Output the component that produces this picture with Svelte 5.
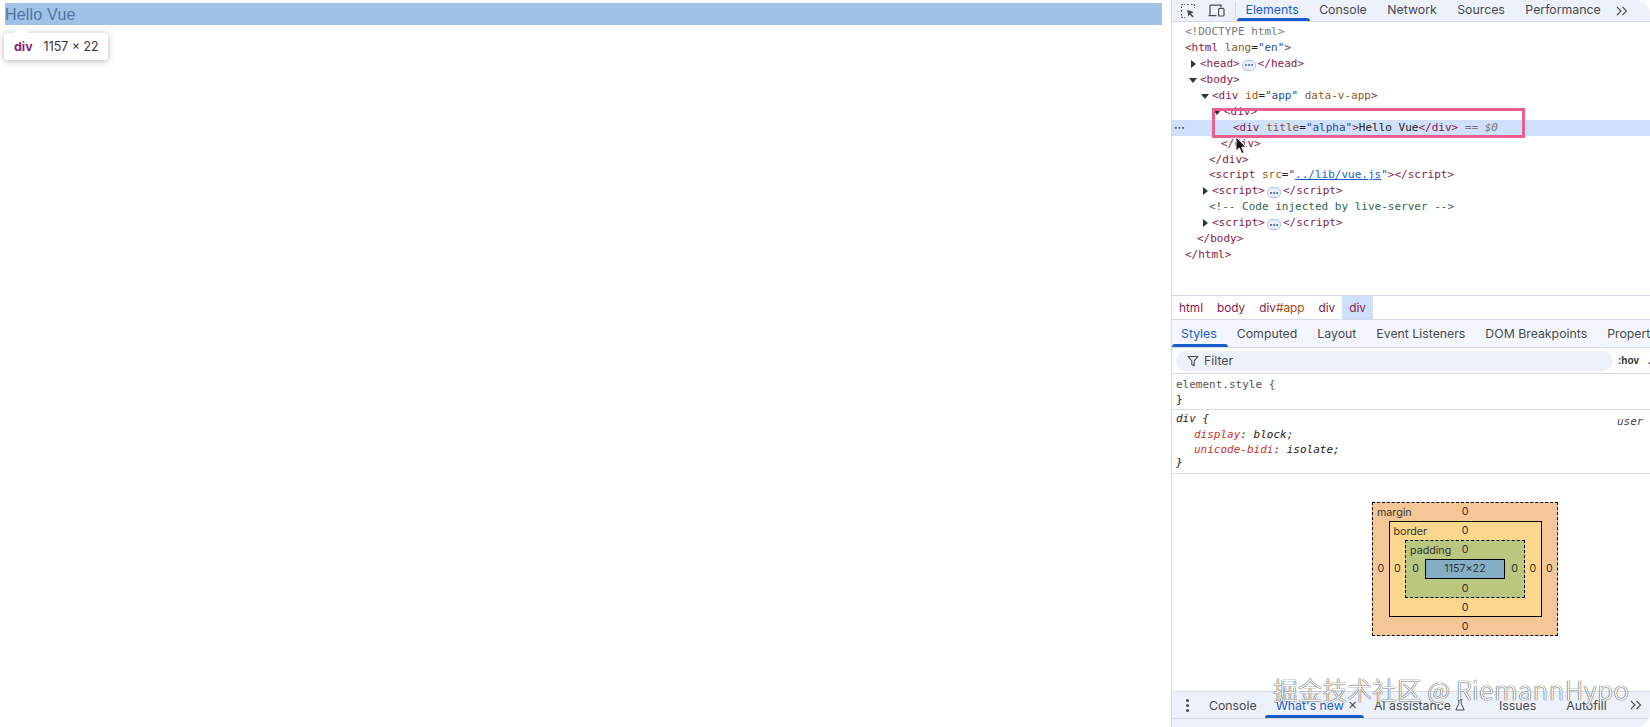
<script lang="ts">
  const topTabs = ['Console', 'Network', 'Sources', 'Performance'];
  const crumbs = ['html', 'body', 'div#app', 'div'];
  const styleTabs = ['Computed', 'Layout', 'Event Listeners', 'DOM Breakpoints', 'Properties'];
</script>

{#snippet more()}
  <span class="more"><span></span><span></span><span></span></span>
{/snippet}

{#snippet chevrons()}
  <svg class="chev" width="12" height="10" viewBox="0 0 12 10" fill="none" stroke="#555" stroke-width="1.2">
    <path d="M1 1l4 4-4 4M6.5 1l4 4-4 4" />
  </svg>
{/snippet}

<div class="screen">
  <main class="page">
    <div class="hello">Hello Vue</div>
    <div class="tip">
      <b>div</b><span>1157 × 22</span>
    </div>
  </main>

  <section class="devtools">
    <nav class="tabs main-tabs">
      <div class="tool-icons">
        <svg width="16" height="16" viewBox="0 0 16 16" fill="none" stroke="#474a50" stroke-width="1.2">
          <path d="M1.5 5V2.5a1 1 0 0 1 1-1H5M7 1.5h2M11 1.5h2.5a1 1 0 0 1 1 1V5M1.5 7v2M1.5 11v2.5a1 1 0 0 0 1 1H5" stroke-dasharray="1.6 1.2" />
          <path d="M7.2 6.8l6.6 2.4-2.8 1.2 2.6 3-1.2 1-2.6-3-1.4 2.4z" fill="#474a50" stroke="none" />
        </svg>
        <svg width="18" height="16" viewBox="0 0 18 16" fill="none" stroke="#474a50" stroke-width="1.2">
          <path d="M2 12V3.2a1 1 0 0 1 1-1h10v2M.5 12.6h8" />
          <rect x="10.6" y="5.4" width="5.4" height="7.6" rx="1" />
        </svg>
      </div>
      <span class="tab active">Elements</span>
      {#each topTabs as t}<span class="tab">{t}</span>{/each}
      {@render chevrons()}
    </nav>

    <div class="tree">
      <div class="row d0 doctype">&lt;!DOCTYPE html&gt;</div>
      <div class="row d0"><i>&lt;html</i> <em>lang</em>=<u>"en"</u><i>&gt;</i></div>
      <div class="row d1 arrowed"><span class="tri right"></span><i>&lt;head&gt;</i>{@render more()}<i>&lt;/head&gt;</i></div>
      <div class="row d1 arrowed"><span class="tri down"></span><i>&lt;body&gt;</i></div>
      <div class="row d2 arrowed"><span class="tri down"></span><i>&lt;div</i> <em>id</em>=<u>"app"</u> <em>data-v-app</em><i>&gt;</i></div>
      <div class="row d3 arrowed"><span class="tri down"></span><i>&lt;div&gt;</i></div>
      <div class="row d4 selected">
        <span class="dots">•••</span>
        <i>&lt;div</i> <em>title</em>=<u>"alpha"</u><i>&gt;</i>Hello Vue<i>&lt;/div&gt;</i> <span class="eq">== <q>$0</q></span>
      </div>
      <div class="row d3"><i>&lt;/div&gt;</i></div>
      <div class="row d2"><i>&lt;/div&gt;</i></div>
      <div class="row d2"><i>&lt;script</i> <em>src</em>=<u>"<a href="#lib">../lib/vue.js</a>"</u><i>&gt;&lt;/script&gt;</i></div>
      <div class="row d2 arrowed"><span class="tri right"></span><i>&lt;script&gt;</i>{@render more()}<i>&lt;/script&gt;</i></div>
      <div class="row d2 comment">&lt;!-- Code injected by live-server --&gt;</div>
      <div class="row d2 arrowed"><span class="tri right"></span><i>&lt;script&gt;</i>{@render more()}<i>&lt;/script&gt;</i></div>
      <div class="row d1"><i>&lt;/body&gt;</i></div>
      <div class="row d0"><i>&lt;/html&gt;</i></div>
      <div class="pink"></div>
      <svg class="cursor" width="14" height="20" viewBox="0 0 14 20">
        <path d="M1 1v14l3.4-3 2.4 5.6 2.4-1-2.4-5.4H11z" fill="#111" stroke="#fff" stroke-width="1" />
      </svg>
    </div>

    <div class="crumbs">
      {#each crumbs as c}
        <span>{#if c === 'div#app'}div<b>#app</b>{:else}{c}{/if}</span>
      {/each}
      <span class="on">div</span>
    </div>

    <nav class="tabs sub">
      <span class="tab active">Styles</span>
      {#each styleTabs as t}<span class="tab">{t}</span>{/each}
    </nav>

    <div class="filter-row">
      <div class="filter">
        <svg width="12" height="12" viewBox="0 0 12 12" fill="none" stroke="#474a50" stroke-width="1.1">
          <path d="M1.2 1.5h9.6L7.2 6v4.6L4.8 9.4V6z" />
        </svg>
        Filter
      </div>
      <span class="hov">:hov</span>
      <span class="hov">.cls</span>
    </div>

    <div class="rule first">
      <div class="grey">element.style {'{'}</div>
      <div>{'}'}</div>
    </div>

    <div class="rule ua">
      <span class="src">user agent</span>
      <div class="open">div {'{'}</div>
      <div class="prop"><span>display</span>: block;</div>
      <div class="prop"><span>unicode-bidi</span>: isolate;</div>
      <div class="close">{'}'}</div>
    </div>

    <div class="metrics">
      <div class="box margin">
        <span class="lbl">margin</span>
        <span class="v-top">0</span>
        <span class="s-left">0</span>
        <div class="box border">
          <span class="lbl">border</span>
          <span class="v-top">0</span>
          <span class="s-left">0</span>
          <div class="box padding">
            <span class="lbl">padding</span>
            <span class="v-top">0</span>
            <span class="s-left">0</span>
            <div class="content">1157×22</div>
            <span class="s-right">0</span>
            <span class="v-bot">0</span>
          </div>
          <span class="s-right">0</span>
          <span class="v-bot">0</span>
        </div>
        <span class="s-right">0</span>
        <span class="v-bot">0</span>
      </div>
    </div>

    <nav class="tabs drawer">
      <span class="kebab"><span></span><span></span><span></span></span>
      <span class="tab">Console</span>
      <span class="tab active news">What's new <small>✕</small></span>
      <span class="tab ai">AI assistance
        <svg width="10" height="12" viewBox="0 0 10 12" fill="none" stroke="#474a50" stroke-width="1">
          <path d="M2.8.7h4.4M3.8.7v4L.8 11h8.4L6.2 4.7v-4" />
        </svg>
      </span>
      <span class="tab issues">Issues</span>
      <span class="tab autofill">Autofill</span>
      {@render chevrons()}
    </nav>
    <div class="drawer-foot"></div>
  </section>

  <div class="mark">掘金技术社区 @ <span>RiemannHypo</span></div>
</div>

<style>
  :global(body) {
    background: #fff;
  }

  .screen {
    position: relative;
    display: flex;
    width: 1650px;
    height: 727px;
    overflow: hidden;
    font-family: Inter, 'Liberation Sans', sans-serif;
    background: #fff;
  }

  .page {
    position: relative;
    flex: 0 0 1171px;
    padding: 3px 0 0 5px;
    box-sizing: border-box;
  }

  .hello {
    width: 1157px;
    height: 22px;
    font: 16px/23px 'Liberation Sans', Arial, sans-serif;
    letter-spacing: 0.2px;
    color: #4f76a3;
    background: #9fc2e7;
  }

  .tip {
    position: absolute;
    left: 4px;
    top: 33px;
    display: flex;
    gap: 11px;
    align-items: center;
    height: 27px;
    padding: 0 9px 0 10px;
    border-radius: 3px;
    font-size: 12.4px;
    color: #333;
    background: #fff;
    box-shadow: 0 1px 6px rgba(0, 0, 0, 0.3);
  }

  .tip::before {
    content: '';
    position: absolute;
    left: 12px;
    top: -5px;
    width: 10px;
    height: 10px;
    background: #fff;
    transform: rotate(45deg);
  }

  .tip b {
    color: #8a1f72;
    font-weight: 700;
  }

  .devtools {
    position: relative;
    flex: 1;
    min-width: 0;
    display: flex;
    flex-direction: column;
    border-left: 1px solid #d3daea;
    border-radius: 0 14px 14px 0;
    overflow: hidden;
  }

  .tabs {
    display: flex;
    align-items: center;
    flex: none;
    font-size: 12.3px;
    color: #474a50;
    background: #edf1f9;
    white-space: nowrap;
  }

  .tab {
    position: relative;
    display: flex;
    align-items: center;
    gap: 4px;
    height: 100%;
  }

  .tab.active {
    color: #1a5cc8;
  }

  .tab.active::after {
    content: '';
    position: absolute;
    left: -9px;
    right: -11px;
    bottom: 0;
    height: 3px;
    border-radius: 3px 3px 0 0;
    background: #1a5cc8;
  }

  .main-tabs {
    height: 22px;
    gap: 20.5px;
    border-bottom: 1px solid #d3daea;
    box-sizing: border-box;
  }

  .main-tabs .tab {
    box-sizing: border-box;
    padding-bottom: 3px;
  }

  .tool-icons {
    display: flex;
    gap: 12px;
    align-items: center;
    padding: 0 9px 0 8px;
    margin-right: -11px;
    border-right: 1px solid #d3daea;
    height: 17px;
  }

  .chev {
    flex: none;
    margin-left: -5px;
  }

  .tree {
    position: relative;
    flex: 0 0 273px;
    padding-top: 2px;
    box-sizing: border-box;
    font: 11px/15.95px 'DejaVu Sans Mono', 'Liberation Mono', monospace;
    color: #222;
    white-space: nowrap;
  }

  .row {
    position: relative;
    height: 15.95px;
  }

  .d0 { padding-left: 13px; }
  .d1 { padding-left: 25px; }
  .d2 { padding-left: 37px; }
  .d3 { padding-left: 49px; }
  .d4 { padding-left: 61px; }

  .arrowed { margin-left: 3px; }

  .doctype { color: #777; }
  .comment { color: #30654a; }

  .row i {
    font-style: normal;
    color: #85204a;
  }

  .row em {
    font-style: normal;
    color: #8e5a1e;
  }

  .row u {
    text-decoration: none;
    color: #2c4d8e;
  }

  .row a {
    color: #1a5cc8;
  }

  .selected {
    background: #cfe0fb;
  }

  .dots {
    position: absolute;
    left: 2px;
    top: 0;
    font-size: 6px;
    letter-spacing: 0;
    color: #333;
  }

  .eq {
    color: #777;
  }

  .eq q {
    quotes: none;
    font-style: italic;
  }

  .tri {
    position: absolute;
    margin-left: -11px;
    margin-top: 4px;
    width: 0;
    height: 0;
  }

  .tri.right {
    margin-left: -9px;
    border-left: 5px solid #333;
    border-top: 4px solid transparent;
    border-bottom: 4px solid transparent;
  }

  .tri.down {
    margin-top: 6px;
    border-top: 5px solid #333;
    border-left: 4px solid transparent;
    border-right: 4px solid transparent;
  }

  .more {
    display: inline-flex;
    align-items: center;
    justify-content: center;
    gap: 1px;
    width: 12px;
    height: 9px;
    margin: 0 2px;
    vertical-align: 0.5px;
    border: 1px solid #a9c4ec;
    border-radius: 5px;
    background: #e9f0fb;
  }

  .more span {
    width: 2px;
    height: 2px;
    border-radius: 50%;
    background: #3a5f9e;
  }

  .pink {
    position: absolute;
    left: 40px;
    top: 86px;
    width: 313px;
    height: 30px;
    border: 3px solid #e8608f;
    box-sizing: border-box;
  }

  .cursor {
    position: absolute;
    left: 63px;
    top: 114px;
  }

  .crumbs {
    flex: 0 0 25px;
    display: flex;
    box-sizing: border-box;
    border-top: 1px solid #d3daea;
    border-bottom: 1px solid #d3daea;
    font-size: 11.8px;
    line-height: 22px;
    color: #85204a;
  }

  .crumbs span {
    padding: 1px 7px 0;
  }

  .crumbs b {
    font-weight: 400;
    color: #a04b10;
  }

  .crumbs .on {
    background: #cfe0fb;
  }

  .sub {
    height: 28px;
    gap: 20px;
    padding-left: 9px;
    border-bottom: 1px solid #d3daea;
    box-sizing: border-box;
    background: #f3f6fc;
  }

  .filter-row {
    flex: 0 0 26px;
    display: flex;
    align-items: center;
    gap: 5px;
    box-sizing: border-box;
    padding-left: 4px;
    border-bottom: 1px solid #d3daea;
    white-space: nowrap;
  }

  .filter {
    flex: 0 0 437px;
    box-sizing: border-box;
    display: flex;
    align-items: center;
    gap: 5px;
    height: 20px;
    padding-left: 11px;
    border-radius: 10px;
    font-size: 12.3px;
    color: #474a50;
    background: #edf1f9;
  }

  .hov {
    font: 700 10px/1 'Liberation Sans', sans-serif;
    color: #333;
  }

  .hov + .hov {
    margin-left: 4px;
  }

  .rule {
    position: relative;
    box-sizing: border-box;
    padding: 0 0 0 4px;
    border-bottom: 1px solid #d3daea;
    font: 11px/15px 'DejaVu Sans Mono', 'Liberation Mono', monospace;
    color: #222;
  }

  .first {
    flex: 0 0 36px;
    padding-top: 3px;
  }

  .ua {
    flex: 0 0 64px;
    font-style: italic;
  }

  .open {
    line-height: 18px;
  }

  .close {
    margin-top: -2px;
  }

  .grey {
    color: #555;
  }

  .src {
    position: absolute;
    left: 445px;
    top: 4px;
    white-space: nowrap;
    color: #444;
  }

  .prop {
    padding-left: 18px;
    line-height: 14.5px;
  }

  .prop span {
    color: #c5352e;
  }

  .metrics {
    flex: 1;
    padding: 28px 0 0 200px;
    font: 10.7px/1 Inter, 'Liberation Sans', sans-serif;
    color: #333;
  }

  .box {
    position: relative;
    display: grid;
    grid-template-columns: 1fr auto 1fr;
    grid-template-rows: 1fr auto 1fr;
    align-items: center;
    justify-items: center;
    box-sizing: border-box;
  }

  .box > .box,
  .content {
    grid-column: 2;
    grid-row: 2;
  }

  .margin {
    width: 186px;
    height: 134px;
    border: 1px dashed #000;
    background: #f6c796;
  }

  .border {
    width: 153px;
    height: 96px;
    border: 1px solid #000;
    background: #fad78c;
  }

  .padding {
    width: 120px;
    height: 58px;
    border: 1px dashed #000;
    background: #b9c77f;
  }

  .v-top {
    grid-column: 2;
    grid-row: 1;
    margin-top: 1px;
  }

  .v-bot {
    grid-column: 2;
    grid-row: 3;
    margin-top: 2px;
  }

  .s-left {
    grid-column: 1;
    grid-row: 2;
  }

  .s-right {
    grid-column: 3;
    grid-row: 2;
  }

  .lbl {
    position: absolute;
    left: 4px;
    top: 5px;
  }

  .content {
    width: 80px;
    height: 20px;
    box-sizing: border-box;
    display: flex;
    align-items: center;
    justify-content: center;
    border: 1px solid #000;
    background: #84aec4;
  }

  .drawer {
    height: 28px;
    gap: 22px;
    margin-top: auto;
    padding-left: 14px;
    border-top: 1px solid #d3daea;
    border-bottom: 1px solid #d3daea;
    box-sizing: border-box;
  }

  .drawer .active::after {
    left: -11px;
    right: -7px;
  }

  .drawer small {
    font-size: 11px;
    color: #474a50;
  }

  .news {
    margin-left: -3px;
  }

  .ai {
    margin-left: -5px;
  }

  .issues {
    margin-left: 12px;
  }

  .autofill {
    margin-left: 8px;
  }

  .drawer .chev {
    margin-left: 1px;
  }

  .kebab {
    display: flex;
    flex-direction: column;
    gap: 2px;
    margin-right: -2px;
  }

  .kebab span {
    width: 3px;
    height: 3px;
    border-radius: 50%;
    background: #474a50;
  }

  .drawer-foot {
    flex: 0 0 8px;
    background: #edf1f9;
  }

  .mark {
    position: absolute;
    left: 1273px;
    top: 671px;
    white-space: nowrap;
    font: 300 24.6px/36px 'Noto Sans CJK SC', 'Noto Sans', sans-serif;
    letter-spacing: 0.2px;
    color: #fff;
    text-shadow: 0 0 1px #333, 0 0 1px #333;
  }

  .mark span {
    font-size: 26px;
    letter-spacing: 0.6px;
  }
</style>
